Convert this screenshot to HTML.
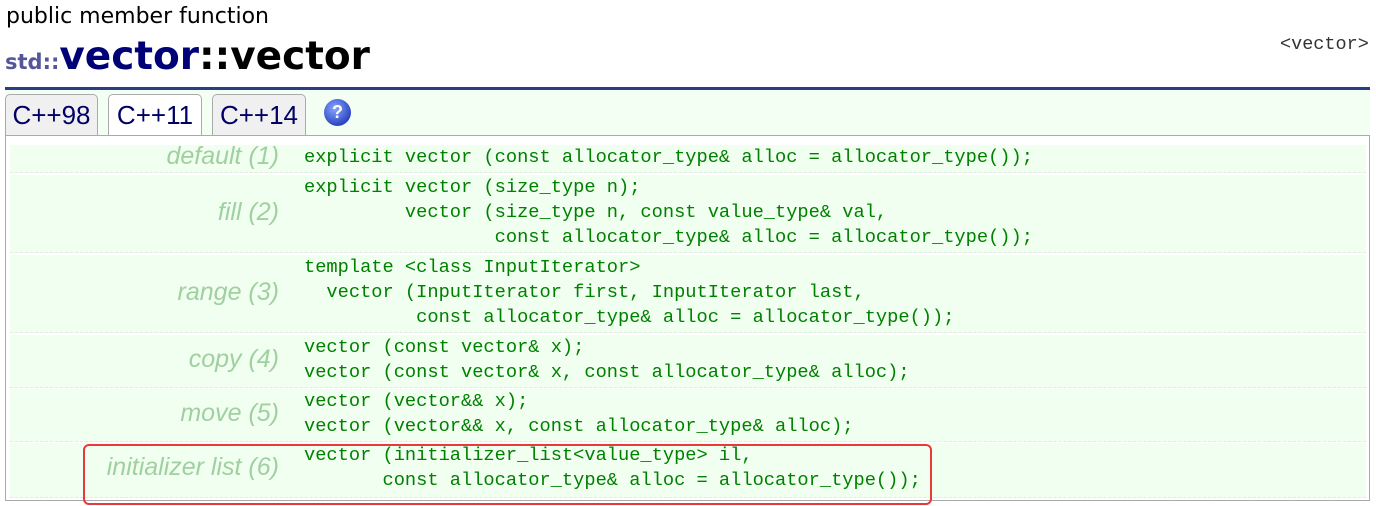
<!DOCTYPE html>
<html><head><meta charset="utf-8"><style>
body{margin:0;width:1376px;height:506px;background:#fff;position:relative;overflow:hidden;font-family:"Liberation Sans",sans-serif}
.a{position:absolute}
.tab{position:absolute;top:94px;height:41px;border:1px solid #aaa;border-bottom:none;border-radius:5px 5px 0 0;background:#f0f0f0;font-size:26px;color:#000066;line-height:40px;text-align:center;box-sizing:border-box}
.box{position:absolute;left:5px;top:135px;width:1365px;height:366px;border:1px solid #aaa;box-sizing:border-box;background:#fff}
.row{position:absolute;left:4px;width:1356px;background:#f0fff0;border-bottom:1px dashed #ddeedd}
.lab{position:absolute;right:1087px;font-style:italic;color:#a0d0a0;font-size:25px;white-space:nowrap}
pre{position:absolute;left:294px;margin:0;font-family:"Liberation Mono",monospace;font-size:18.7px;line-height:25px;color:#008000}
</style></head><body>
<div class="a" style="left:6px;top:4px;font-family:'DejaVu Sans',sans-serif;font-size:22px;color:#000">public member function</div>
<div class="a" style="left:5px;top:34px;font-weight:bold;white-space:nowrap;font-family:'DejaVu Sans',sans-serif"><span style="font-size:21px;color:#555599">std::</span><span style="font-size:39px;color:#000077">vector</span><span style="font-size:39px;color:#000">::vector</span></div>
<div class="a" style="left:1280px;top:34px;font-family:'Liberation Mono',monospace;font-size:18.5px;color:#333">&lt;vector&gt;</div>
<div class="a" style="left:5px;top:87px;width:1365px;height:3px;background:#2a3d86"></div>
<div class="a" style="left:5px;top:90px;width:1365px;height:46px;background:#f4fff4"></div>
<div class="tab" style="left:5px;width:93px">C++98</div>
<div class="tab" style="left:108px;width:94px;background:#fff;height:42px">C++11</div>
<div class="tab" style="left:212px;width:94px">C++14</div>
<div class="a" style="left:324px;top:99px;width:27px;height:27px;border-radius:50%;background:radial-gradient(circle at 40% 35%,#8aa6ff,#2c48c0 70%);color:#fff;font-weight:bold;font-size:18px;text-align:center;line-height:27px">?</div>
<div class="box">
<div class="row" style="top:9px;height:27px"><div class="lab" style="top:-3px">default (1)</div><pre style="top:0">explicit vector (const allocator_type&amp; alloc = allocator_type());</pre></div>
<div class="row" style="top:39px;height:77px"><div class="lab" style="top:23px">fill (2)</div><pre style="top:0">explicit vector (size_type n);
         vector (size_type n, const value_type&amp; val,
                 const allocator_type&amp; alloc = allocator_type());</pre></div>
<div class="row" style="top:119px;height:77px"><div class="lab" style="top:23px">range (3)</div><pre style="top:0">template &lt;class InputIterator&gt;
  vector (InputIterator first, InputIterator last,
          const allocator_type&amp; alloc = allocator_type());</pre></div>
<div class="row" style="top:199px;height:52px"><div class="lab" style="top:10px">copy (4)</div><pre style="top:0">vector (const vector&amp; x);
vector (const vector&amp; x, const allocator_type&amp; alloc);</pre></div>
<div class="row" style="top:253px;height:52px"><div class="lab" style="top:10px">move (5)</div><pre style="top:0">vector (vector&amp;&amp; x);
vector (vector&amp;&amp; x, const allocator_type&amp; alloc);</pre></div>
<div class="row" style="top:307px;height:54px"><div class="lab" style="top:10px">initializer list (6)</div><pre style="top:0">vector (initializer_list&lt;value_type&gt; il,
       const allocator_type&amp; alloc = allocator_type());</pre></div>
</div>
<div class="a" style="left:83px;top:444px;width:849px;height:61px;border:2px solid #e83a3a;border-radius:6px;box-sizing:border-box"></div>
</body></html>
